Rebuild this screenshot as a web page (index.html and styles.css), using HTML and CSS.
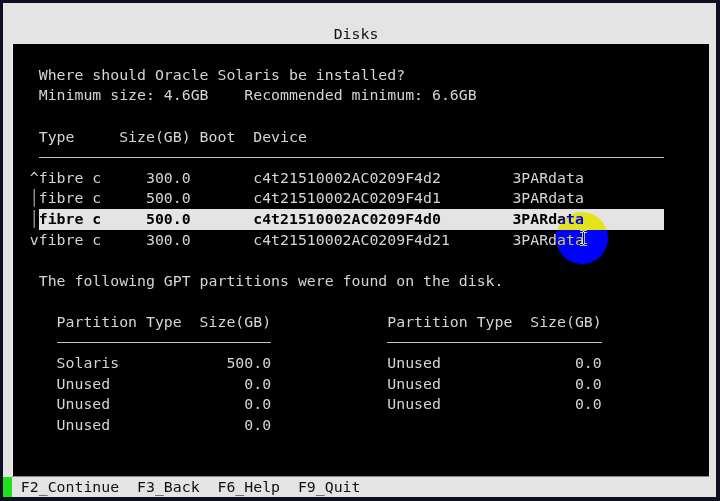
FILE: index.html
```html
<!DOCTYPE html>
<html lang="en">
<head>
    <meta charset="UTF-8">
    <title>Disks</title>
    <link rel="stylesheet" href="styles.css">
</head>
<body>
    <div class="screen">
        <div class="line"></div>
        <div class="line title">Disks</div>

        <div class="panel">
            <div class="line"></div>
            <div class="line">   Where should Oracle Solaris be installed?</div>
            <div class="line">   Minimum size: 4.6GB    Recommended minimum: 6.6GB</div>
            <div class="line"></div>
            <div class="line">   Type     Size(GB) Boot  Device</div>
            <div class="line rule-row"><span class="rule rule-wide"></span></div>
            <div class="line">  ^fibre c     300.0       c4t21510002AC0209F4d2        3PARdata</div>
            <div class="line">  <span class="bar">│</span>fibre c     500.0       c4t21510002AC0209F4d1        3PARdata</div>
            <div class="line">  <span class="bar">│</span><span class="selected">fibre c     500.0       c4t21510002AC0209F4d0        3PARdata</span></div>
            <div class="line">  vfibre c     300.0       c4t21510002AC0209F4d21       3PARdata</div>
            <div class="line"></div>
            <div class="line">   The following GPT partitions were found on the disk.</div>
            <div class="line"></div>
            <div class="line">     Partition Type  Size(GB)             Partition Type  Size(GB)</div>
            <div class="line rule-row"><span class="rule rule-part"></span><span class="rule rule-part"></span></div>
            <div class="line">     Solaris            500.0             Unused               0.0</div>
            <div class="line">     Unused               0.0             Unused               0.0</div>
            <div class="line">     Unused               0.0             Unused               0.0</div>
            <div class="line">     Unused               0.0</div>
            <div class="line"></div>
            <div class="line"></div>
        </div>

        <div class="line footer"><span class="ok"> </span> F2_Continue  F3_Back  F6_Help  F9_Quit</div>
    </div>

    <!-- click highlight from the screen recorder -->
    <div class="click"></div>
    <svg class="ibeam" width="9" height="16" viewBox="0 0 9 16">
        <path d="M1 1.5h2.5l1 1 1-1H8M4.5 2.5v11M1 14.5h2.5l1-1 1 1H8" fill="none" stroke="#fff" stroke-width="2.4"/>
        <path d="M1 1.5h2.5l1 1 1-1H8M4.5 2.5v11M1 14.5h2.5l1-1 1 1H8" fill="none" stroke="#000" stroke-width="1"/>
    </svg>
</body>
</html>
```

FILE: styles.css
```css
:root {
    --frame: #e4e4e4;
    --text: #d4d4d4;
    --line-h: 20.6px;
}

body {
    margin: 0;
    background-color: #0e0f1f;
    font-family: "DejaVu Sans Mono", monospace;
    font-size: 14.85px;
    line-height: var(--line-h);
}

.screen {
    margin: 3px 0 0 3px;
    width: 713px;
    background-color: var(--frame);
    color: #111;
    overflow: hidden;
}

.line {
    height: var(--line-h);
    white-space: pre;
}

.title {
    padding-left: 37ch;
}

.panel {
    margin-left: 1ch;
    width: 78ch;
    background-color: #000;
    color: var(--text);
    box-shadow: inset 0 -1px #8a8a8a, inset 1px 0 #f4f4f4;
}

.bar {
    color: #a8a8a8;
}

.selected {
    display: inline-block;
    width: 70ch;
    background-color: var(--frame);
    color: #000;
    font-weight: bold;
}

/* horizontal rules under table headers */
.rule-row {
    display: flex;
    align-items: center;
    gap: 13ch;
}

.rule {
    border-top: 1px solid #c4c4c4;
}

.rule-wide {
    margin-left: 3ch;
    width: 70ch;
}

.rule-part {
    width: 24ch;
}

.rule-part:first-child {
    margin-left: 5ch;
}

.footer {
    color: #111;
}

.ok {
    display: inline-block;
    width: 1ch;
    background-color: #1ee01e;
}

.click {
    position: absolute;
    left: 556px;
    top: 212px;
    width: 52px;
    height: 52px;
    border-radius: 50%;
    background-color: #0000ff;
    mix-blend-mode: difference;
}

.ibeam {
    position: absolute;
    left: 579px;
    top: 230px;
}
```
